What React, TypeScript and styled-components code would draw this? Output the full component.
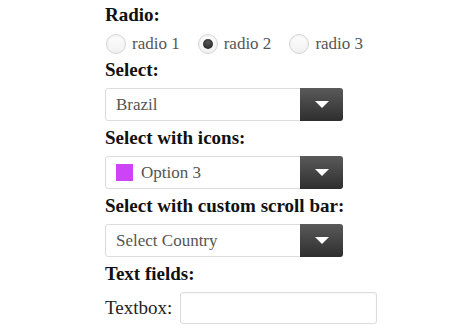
import React from 'react';
import styled, { createGlobalStyle } from 'styled-components';

const GlobalStyle = createGlobalStyle`
  body {
    margin: 0;
    background: #fff;
    font-family: "Liberation Serif", "Times New Roman", serif;
  }
`;

const Page = styled.div`
  padding: 4px 0 0 105px;
  display: flex;
  flex-direction: column;
`;

const Heading = styled.h3`
  margin: 0 0 7px;
  font-size: 19px;
  line-height: 22px;
  font-weight: 700;
  color: #111;
`;

const RadioRow = styled.div`
  display: flex;
  align-items: center;
  gap: 18px;
  height: 22px;
  margin: 0 0 4px 1px;
`;

const RadioItem = styled.label`
  display: flex;
  align-items: center;
  gap: 6px;
  font-size: 17px;
  color: #555;
`;

const RadioCircle = styled.span<{ $checked?: boolean }>`
  width: 18px;
  height: 18px;
  border-radius: 50%;
  border: 1px solid #d6d6d6;
  background: linear-gradient(#fdfdfd, #f1f1f1);
  box-shadow: inset 0 1px 2px rgba(0, 0, 0, 0.06);
  display: flex;
  align-items: center;
  justify-content: center;

  &::after {
    content: '';
    display: ${(p) => (p.$checked ? 'block' : 'none')};
    width: 10px;
    height: 10px;
    border-radius: 50%;
    background: radial-gradient(circle at 50% 35%, #555, #1e1e1e);
  }
`;

const SelectBox = styled.div`
  width: 238px;
  height: 33px;
  box-sizing: border-box;
  border: 1px solid #dcdcdc;
  border-radius: 3px;
  display: flex;
  align-items: stretch;
  margin-bottom: 6px;
  background: #fff;
`;

const SelectValue = styled.div`
  flex: 1;
  display: flex;
  align-items: center;
  gap: 8px;
  padding-left: 10px;
  font-size: 17px;
  color: #555;
`;

const Swatch = styled.span<{ $color: string }>`
  width: 17px;
  height: 17px;
  background: ${(p) => p.$color};
`;

const ArrowButton = styled.div`
  width: 43px;
  margin: -1px -1px -1px 0;
  border-radius: 0 3px 3px 0;
  background: linear-gradient(#5a5a5a, #2e2e2e);
  display: flex;
  align-items: center;
  justify-content: center;

  &::after {
    content: '';
    width: 0;
    height: 0;
    border-left: 7px solid transparent;
    border-right: 7px solid transparent;
    border-top: 7px solid #fff;
  }
`;

const FieldRow = styled.div`
  display: flex;
  align-items: center;
  gap: 8px;
`;

const FieldLabel = styled.label`
  font-size: 19px;
  color: #222;
`;

const TextInput = styled.input`
  width: 197px;
  height: 32px;
  box-sizing: border-box;
  border: 1px solid #dcdcdc;
  border-radius: 3px;
  box-shadow: inset 0 1px 2px rgba(0, 0, 0, 0.04);
  outline: none;
`;

function Select({ value, color }: { value: string; color?: string }) {
  return (
    <SelectBox>
      <SelectValue>
        {color && <Swatch $color={color} />}
        {value}
      </SelectValue>
      <ArrowButton />
    </SelectBox>
  );
}

export default function App() {
  return (
    <>
      <GlobalStyle />
      <Page>
        <Heading>{'Radio:'}</Heading>
        <RadioRow>
          <RadioItem><RadioCircle />{'radio 1'}</RadioItem>
          <RadioItem><RadioCircle $checked />{'radio 2'}</RadioItem>
          <RadioItem><RadioCircle />{'radio 3'}</RadioItem>
        </RadioRow>

        <Heading>{'Select:'}</Heading>
        <Select value="Brazil" />

        <Heading>{'Select with icons:'}</Heading>
        <Select value="Option 3" color="#cc44f6" />

        <Heading>{'Select with custom scroll bar:'}</Heading>
        <Select value="Select Country" />

        <Heading>{'Text fields:'}</Heading>
        <FieldRow>
          <FieldLabel>{'Textbox:'}</FieldLabel>
          <TextInput type="text" />
        </FieldRow>
      </Page>
    </>
  );
}
